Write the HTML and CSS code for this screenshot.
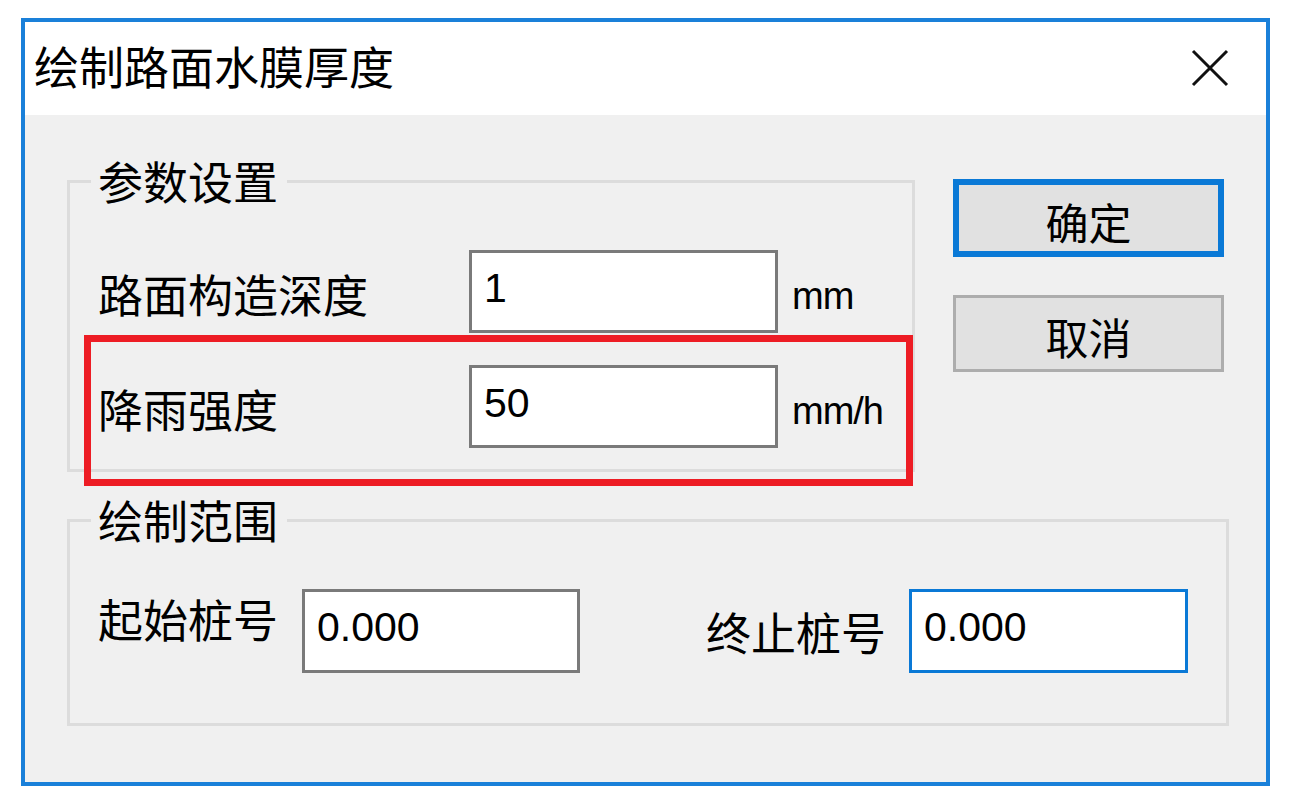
FILE: index.html
```html
<!DOCTYPE html>
<html lang="zh-CN">
<head>
<meta charset="utf-8">
<title>绘制路面水膜厚度</title>
<link rel="stylesheet" href="styles.css">
</head>
<body>
<div class="window">
  <div class="titlebar">
    <span class="title">绘制路面水膜厚度</span>
    <svg class="close" width="38" height="38" viewBox="0 0 38 38" aria-label="关闭">
      <path d="M2 2 L36 36 M36 2 L2 36" stroke="#111" stroke-width="3" fill="none"/>
    </svg>
  </div>
  <div class="client">
    <fieldset class="group group-params">
      <legend>参数设置</legend>
      <div class="row row-first">
        <span class="label">路面构造深度</span>
        <input class="edit" type="text" value="1" readonly>
        <span class="unit">mm</span>
      </div>
      <div class="row row-second">
        <span class="label">降雨强度</span>
        <input class="edit" type="text" value="50" readonly>
        <span class="unit">mm/h</span>
        <div class="highlight"></div>
      </div>
    </fieldset>
    <div class="buttons">
      <button class="btn btn-default" type="button">确定</button>
      <button class="btn" type="button">取消</button>
    </div>
    <fieldset class="group group-range">
      <legend>绘制范围</legend>
      <div class="row row-range">
        <span class="label label-start">起始桩号</span>
        <input class="edit edit-range" type="text" value="0.000" readonly>
        <span class="label label-end">终止桩号</span>
        <input class="edit edit-range edit-focus" type="text" value="0.000" readonly>
      </div>
    </fieldset>
  </div>
</div>
</body>
</html>
```
FILE: styles.css
```css
* {
  box-sizing: border-box;
}

body {
  margin: 0;
  background: #ffffff;
  font-family: "Noto Sans CJK SC", "Noto Sans", sans-serif;
  color: #000;
}

.window {
  margin: 18px 0 0 21px;
  width: 1249px;
  height: 768px;
  border: 4px solid #1a80d9;
  display: flex;
  flex-direction: column;
}

.titlebar {
  height: 93px;
  flex: 0 0 93px;
  background: #ffffff;
  display: flex;
  align-items: center;
  justify-content: space-between;
  padding: 0 37px 7px 9px;
}

.title {
  font-size: 45px;
  line-height: 45px;
}

.close {
  margin-top: 5px;
}

.client {
  flex: 1;
  background: #f0f0f0;
  display: grid;
  grid-template-columns: 848px 271px;
  column-gap: 38px;
  row-gap: 25px;
  align-content: start;
  padding: 43px 0 0 42px;
}

.group {
  margin: 0;
  padding: 0 0 0 28px;
  border: 3px solid #dcdcdc;
  min-width: 0;
}

.group legend {
  font-size: 45px;
  line-height: 46px;
  padding: 0 9px 0 7px;
  margin-left: -7px;
}

.group-params {
  height: 314px;
}

.group-range {
  grid-column: 1 / -1;
  width: 1162px;
  height: 229px;
}

.row {
  display: flex;
  align-items: center;
  height: 83px;
}

.row-first {
  margin-top: 46px;
}

.row-second {
  margin-top: 32px;
  position: relative;
}

.label {
  font-size: 45px;
  line-height: 46px;
  white-space: nowrap;
}

.row-first .label,
.row-second .label {
  flex: 0 0 371px;
  margin-top: 4px;
}

.edit {
  flex: 0 0 309px;
  width: 309px;
  height: 83px;
  margin: 0;
  border: 3px solid #7a7a7a;
  background: #ffffff;
  font-family: "Liberation Sans", Arial, sans-serif;
  font-size: 41px;
  line-height: 46px;
  color: #000;
  padding: 12px 10px 19px 12px;
  outline: none;
}

.unit {
  align-self: flex-start;
  margin: 27px 0 0 14px;
  font-family: "Liberation Sans", Arial, sans-serif;
  font-size: 38px;
  line-height: 38px;
  letter-spacing: -1px;
  color: #000;
}

.highlight {
  position: absolute;
  left: -14px;
  top: -30px;
  width: 829px;
  height: 151px;
  border: 7px solid #ed1c24;
  pointer-events: none;
}

.buttons {
  display: flex;
  flex-direction: column;
  gap: 38px;
  padding-top: 21px;
}

.btn {
  width: 271px;
  height: 77px;
  margin: 0;
  background: #e1e1e1;
  border: 3px solid #adadad;
  font-family: "Noto Sans CJK SC", sans-serif;
  font-size: 43px;
  line-height: 46px;
  color: #000;
  padding: 5px 0 0 0;
}

.btn-default {
  height: 78px;
  border: 6px solid #0a79d6;
}

.row-range {
  margin-top: 46px;
  height: 84px;
  align-items: flex-start;
}

.edit-range {
  flex: 0 0 278px;
  width: 278px;
  height: 84px;
}

.label-start {
  margin: 7px 24px 0 0;
}

.label-end {
  margin: 20px 23px 0 126px;
}

.edit-focus {
  flex-basis: 279px;
  width: 279px;
  border-color: #0a79d6;
}
```
